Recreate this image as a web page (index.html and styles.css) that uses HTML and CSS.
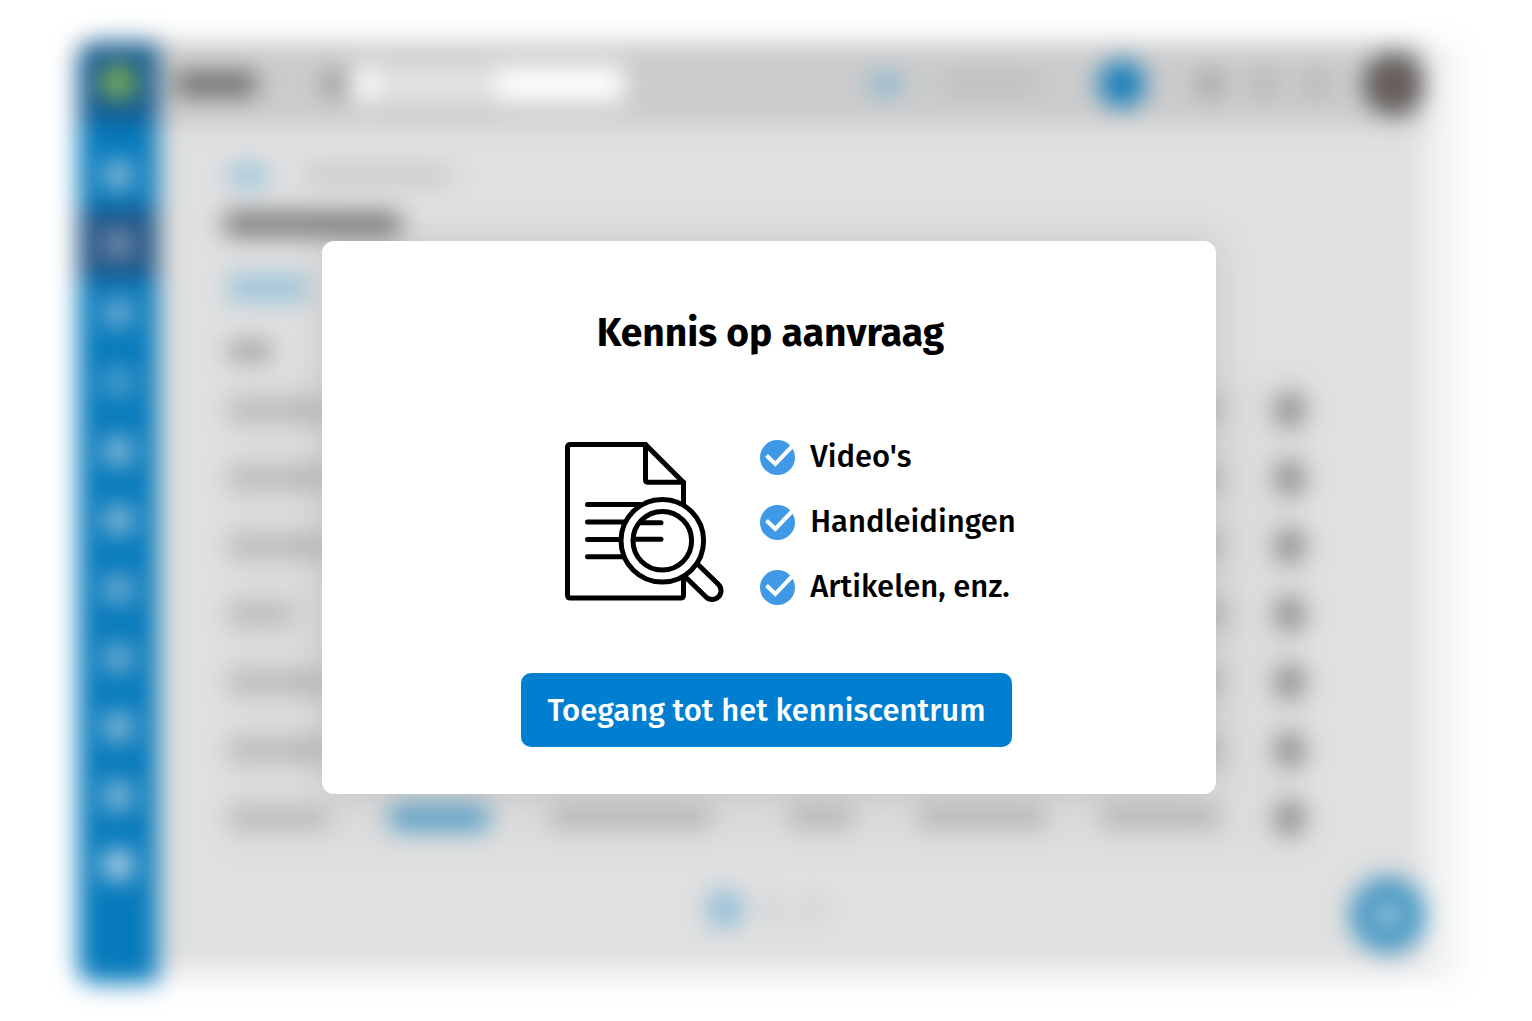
FILE: index.html
```html
<!DOCTYPE html>
<html lang="nl">
<head>
<meta charset="utf-8">
<meta name="viewport" content="width=device-width, initial-scale=1">
<title>Kennis op aanvraag</title>
<link rel="stylesheet" href="styles.css">
</head>
<body>
<div class="page">
  <div class="app" aria-hidden="true" inert>
    <nav class="sidebar">
      <div class="logo"><i></i></div>
      <ul class="nav">
        <li><i></i></li>
        <li class="active"><i></i></li>
        <li class="dim"><i></i></li>
        <li class="faint"><i></i></li>
        <li><i></i></li>
        <li><i></i></li>
        <li class="dim"><i></i></li>
        <li class="dim"><i></i></li>
        <li><i></i></li>
        <li><i></i></li>
        <li class="bright"><i></i></li>
      </ul>
    </nav>
    <div class="main">
      <header class="topbar">
        <span class="bar brand"></span>
        <span class="search-icon"></span>
        <input class="search" type="search" aria-label="Zoeken">
        <span class="bar top-link"></span>
        <span class="bar top-text"></span>
        <span class="add"></span>
        <span class="tool first"></span>
        <span class="tool"></span>
        <span class="tool"></span>
        <span class="avatar"></span>
      </header>
      <div class="content">
        <div class="crumbs"><span class="bar crumb-link"></span><span class="bar crumb"></span></div>
        <div class="bar title"></div>
        <div class="bar filter"></div>
        <table class="items">
          <colgroup><col class="c1"><col class="c2"><col class="c3"><col class="c4"><col class="c5"><col class="c6"><col class="c7"></colgroup>
          <thead><tr><th><span class="bar head"></span></th><th></th><th></th><th></th><th></th><th></th><th></th></tr></thead>
          <tbody>
            <tr><td><span class="bar w100"></span></td><td><span class="bar link"></span></td><td><span class="bar w160"></span></td><td><span class="bar w64"></span></td><td><span class="bar w128"></span></td><td><span class="bar w120"></span></td><td><i class="dot"></i></td></tr>
            <tr><td><span class="bar w100"></span></td><td><span class="bar link"></span></td><td><span class="bar w160"></span></td><td><span class="bar w64"></span></td><td><span class="bar w128"></span></td><td><span class="bar w120"></span></td><td><i class="dot"></i></td></tr>
            <tr><td><span class="bar w100"></span></td><td><span class="bar link"></span></td><td><span class="bar w160"></span></td><td><span class="bar w64"></span></td><td><span class="bar w128"></span></td><td><span class="bar w120"></span></td><td><i class="dot"></i></td></tr>
            <tr><td><span class="bar w64"></span></td><td><span class="bar link"></span></td><td><span class="bar w160"></span></td><td><span class="bar w64"></span></td><td><span class="bar w128"></span></td><td><span class="bar w128"></span></td><td><i class="dot"></i></td></tr>
            <tr><td><span class="bar w100"></span></td><td><span class="bar link"></span></td><td><span class="bar w160"></span></td><td><span class="bar w64"></span></td><td><span class="bar w128"></span></td><td><span class="bar w120"></span></td><td><i class="dot"></i></td></tr>
            <tr><td><span class="bar w100"></span></td><td><span class="bar link"></span></td><td><span class="bar w160"></span></td><td><span class="bar w64"></span></td><td><span class="bar w128"></span></td><td><span class="bar w120"></span></td><td><i class="dot"></i></td></tr>
            <tr><td><span class="bar w100"></span></td><td><span class="bar link"></span></td><td><span class="bar w160"></span></td><td><span class="bar w64"></span></td><td><span class="bar w128"></span></td><td><span class="bar w120"></span></td><td><i class="dot"></i></td></tr>
          </tbody>
        </table>
        <div class="pages"><i class="current"></i><i></i><i></i></div>
      </div>
    </div>
    <div class="fab"><i></i></div>
  </div>

  <section class="dialog" role="dialog" aria-labelledby="dialog-title">
    <h1 id="dialog-title">Kennis op aanvraag</h1>
    <div class="offer">
      <svg class="doc" viewBox="15 17 160 160" fill="none" stroke="#000" stroke-width="5" stroke-linecap="round" stroke-linejoin="round" aria-hidden="true">
        <path d="M133.500 78V57.500L95.500 19.500H20.500Q17.500 19.500 17.500 22.500V170Q17.500 173 20.500 173H130.500Q133.500 173 133.500 170V153"/>
        <path d="M95.500 19.500V55Q95.500 57.200 98 57.200H133.500"/>
        <path d="M37.500 79.500H90M37.500 97H74M37.500 114.500H70M37.500 131.700H74M91 97.800H111M84 114.300H111"/>
        <circle cx="112.300" cy="115.700" r="41.300"/>
        <circle cx="112.300" cy="115.700" r="29.300"/>
        <path d="M148.500 140L168.300 159.300A8.700 8.700 0 0 1 156 172L137 153.500"/>
      </svg>
      <ul class="benefits">
        <li><svg class="check" viewBox="0 0 35 35" aria-hidden="true"><circle cx="17.500" cy="17.500" r="17.500" fill="#3f99e6"/><path d="M6.500 15.500L15.300 24L32 6.500" fill="none" stroke="#fff" stroke-width="4"/></svg>Video's</li>
        <li><svg class="check" viewBox="0 0 35 35" aria-hidden="true"><circle cx="17.500" cy="17.500" r="17.500" fill="#3f99e6"/><path d="M6.500 15.500L15.300 24L32 6.500" fill="none" stroke="#fff" stroke-width="4"/></svg>Handleidingen</li>
        <li><svg class="check" viewBox="0 0 35 35" aria-hidden="true"><circle cx="17.500" cy="17.500" r="17.500" fill="#3f99e6"/><path d="M6.500 15.500L15.300 24L32 6.500" fill="none" stroke="#fff" stroke-width="4"/></svg>Artikelen, enz.</li>
      </ul>
    </div>
    <button class="cta" type="button">Toegang tot het kenniscentrum</button>
  </section>
</div>
</body>
</html>
```
FILE: styles.css
```css
* { box-sizing: border-box; }

body {
  margin: 0;
  background: #fff;
  color: #000;
  font-family: "Fira Sans", "Noto Sans", "Open Sans", sans-serif;
}

.page {
  display: grid;
  min-height: 100vh;
  overflow: hidden;
}

/* Dimmed application behind the dialog */
.app {
  grid-area: 1 / 1;
  position: relative;
  display: flex;
  margin: 42px 72px 38px 78px;
  background: #f3f3f3;
  border-radius: 16px;
  filter: blur(12px);
}

.bar {
  display: block;
  height: 18px;
  background: #b0b0b0;
  border-radius: 4px;
}

.sidebar {
  flex: none;
  width: 80px;
  background: #067abc;
  border-radius: 16px 0 0 16px;
}

.logo {
  display: grid;
  place-items: center;
  height: 80px;
  background: #155a90;
  border-radius: 16px 0 0 0;
}

.logo i {
  width: 36px;
  height: 36px;
  background: #82b254;
  border-radius: 50%;
}

.nav {
  margin: 0;
  padding: 18px 0 0;
  list-style: none;
}

.nav li {
  display: grid;
  place-items: center;
  height: 69px;
}

.nav i {
  width: 28px;
  height: 28px;
  background: #98c2dc;
  border-radius: 6px;
}

.nav .active { background: #205384; }
.nav .active i { background: #8496b0; }
.nav .dim i { background: #7fb4d5; }
.nav .faint i { background: #5aa5cf; }
.nav .bright i { background: #cfe0ec; }

.main {
  flex: 1;
  min-width: 0;
  margin: 0 36px 16px 0;
  background: #e0e0e0;
}

.topbar {
  display: flex;
  align-items: center;
  height: 82px;
  padding: 2px 0 0 18px;
  background: #cbcbcb;
}

.brand {
  width: 80px;
  height: 24px;
  background: #6a6a6a;
}

.search-icon {
  width: 18px;
  height: 26px;
  margin-left: 70px;
  background: #8c8c8c;
}

.search {
  width: 272px;
  height: 36px;
  margin-left: 8px;
  border: 0;
  border-radius: 4px;
  background: linear-gradient(90deg, #fafafa 8%, #e3e3e3 12%, #e3e3e3 52%, #fff 54%);
}

.top-link {
  width: 32px;
  height: 20px;
  margin-left: auto;
  background: #84b6d2;
}

.top-text {
  width: 92px;
  margin-left: 42px;
  background: #bcbcbc;
}

.add {
  width: 48px;
  height: 48px;
  margin-left: 62px;
  background: #1c80ba;
  border-radius: 50%;
}

.tool {
  width: 20px;
  height: 24px;
  margin-left: 32px;
  background: #b0b0b0;
}

.tool.first {
  width: 24px;
  margin-left: 52px;
  background: #a0a0a0;
}

.avatar {
  width: 60px;
  height: 60px;
  margin-left: 38px;
  background: radial-gradient(circle, #8a6f6b 15%, #4d4d4d 45%);
  border-radius: 50%;
}

.content { padding: 42px 122px 0 66px; }

.crumbs {
  display: flex;
  gap: 36px;
  padding-left: 4px;
}

.crumb-link {
  width: 40px;
  height: 20px;
  background: #94c3de;
}

.crumb {
  width: 148px;
  background: #c8c8c8;
}

.title {
  width: 176px;
  height: 24px;
  margin-top: 26px;
  background: #787878;
}

.filter {
  width: 78px;
  height: 28px;
  margin: 38px 0 0 4px;
  background: #9dc4d9;
}

.items {
  width: 100%;
  margin-top: 24px;
  border-spacing: 0;
  table-layout: fixed;
}

.items th,
.items td { padding: 0 0 0 4px; }
.items th { height: 50px; }
.items td {
  height: 68px;
  background: #dcdcdc;
}

.c1, .c2 { width: 15%; }
.c3 { width: 22%; }
.c4 { width: 12%; }
.c5 { width: 17%; }
.c6 { width: 16%; }
.c7 { width: 3%; }

.head {
  width: 44px;
  background: #989898;
}

.w64 { width: 64px; }
.w100 { width: 100px; }
.w120 { width: 120px; }
.w128 { width: 128px; }
.w160 { width: 160px; }

.link {
  width: 98px;
  height: 24px;
  background: #4f9dc7;
}

.dot {
  display: block;
  width: 32px;
  height: 36px;
  background: #8e8e8e;
  border-radius: 50%;
}

.pages {
  display: flex;
  align-items: center;
  justify-content: center;
  gap: 26px;
  margin-top: 40px;
}

.pages i {
  width: 12px;
  height: 20px;
  background: #c4c4c4;
}

.pages .current {
  width: 34px;
  height: 34px;
  background: #90bdd7;
}

.fab {
  position: absolute;
  right: 34px;
  bottom: 30px;
  display: grid;
  place-items: center;
  width: 76px;
  height: 76px;
  background: #4094c2;
  border-radius: 50%;
}

.fab i {
  width: 20px;
  height: 20px;
  background: #d0e0e8;
}

/* Dialog */
.dialog {
  grid-area: 1 / 1;
  position: relative;
  align-self: center;
  justify-self: center;
  display: flex;
  flex-direction: column;
  align-items: center;
  width: min(894px, 90%);
  margin: 14px 0 0 5px;
  padding: 68px 24px 47px;
  background: #fff;
  border-radius: 12px;
  box-shadow: 0 0 40px rgba(0, 0, 0, 0.12);
}

h1 {
  margin: 0;
  padding-left: 4px;
  font-size: 39px;
  font-weight: 700;
  line-height: 48px;
}

.offer {
  display: flex;
  align-items: center;
  gap: 35px;
  margin-top: 82px;
  padding-left: 44px;
}

.doc {
  width: 160px;
  height: 160px;
}

.benefits {
  display: grid;
  gap: 29px;
  margin: 0;
  padding: 0;
  list-style: none;
}

.benefits li {
  display: flex;
  align-items: center;
  gap: 15px;
  font-size: 31px;
  font-weight: 500;
  line-height: 36px;
}

.check {
  flex: none;
  width: 35px;
  height: 35px;
}

.cta {
  min-height: 74px;
  margin: 68px 4px 0 0;
  padding: 0 26px;
  border: 0;
  border-radius: 10px;
  background: #007fd0;
  color: #fff;
  font: inherit;
  font-size: 31px;
  font-weight: 500;
}
```
